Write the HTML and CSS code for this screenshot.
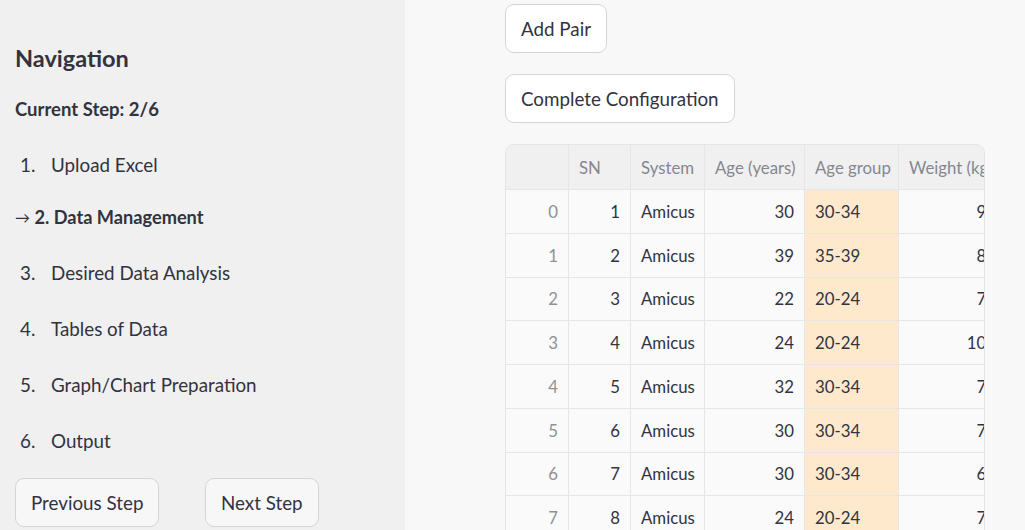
FILE: index.html
```html
<!DOCTYPE html>
<html lang="en">
<head>
<meta charset="utf-8">
<title>Data Management</title>
<link rel="stylesheet" href="styles.css">
</head>
<body>
<div class="app">
  <aside class="sidebar">
    <h2 class="nav-title">Navigation</h2>
    <p class="current-step">Current Step: 2/6</p>
    <ol class="steps">
      <li class="step"><span class="num">1.</span><span>Upload Excel</span></li>
      <li class="step step-current"><span class="arrow">→</span> 2. Data Management</li>
      <li class="step"><span class="num">3.</span><span>Desired Data Analysis</span></li>
      <li class="step"><span class="num">4.</span><span>Tables of Data</span></li>
      <li class="step"><span class="num">5.</span><span>Graph/Chart Preparation</span></li>
      <li class="step"><span class="num">6.</span><span>Output</span></li>
    </ol>
    <div class="nav-buttons">
      <div class="nav-col"><button class="btn btn-side">Previous Step</button></div>
      <div class="nav-col"><button class="btn btn-side">Next Step</button></div>
    </div>
  </aside>
  <main class="main">
    <button class="btn">Add Pair</button>
    <button class="btn">Complete Configuration</button>
    <div class="table-wrap">
      <div class="grid" role="table">
        <div class="cell head"></div><div class="cell head">SN</div><div class="cell head">System</div><div class="cell head">Age (years)</div><div class="cell head">Age group</div><div class="cell head">Weight (kg)</div>

        <div class="cell idx">0</div><div class="cell num">1</div><div class="cell">Amicus</div><div class="cell num">30</div><div class="cell grp">30-34</div><div class="cell num">92</div>
        <div class="cell idx">1</div><div class="cell num">2</div><div class="cell">Amicus</div><div class="cell num">39</div><div class="cell grp">35-39</div><div class="cell num">85</div>
        <div class="cell idx">2</div><div class="cell num">3</div><div class="cell">Amicus</div><div class="cell num">22</div><div class="cell grp">20-24</div><div class="cell num">74</div>
        <div class="cell idx">3</div><div class="cell num">4</div><div class="cell">Amicus</div><div class="cell num">24</div><div class="cell grp">20-24</div><div class="cell num">103</div>
        <div class="cell idx">4</div><div class="cell num">5</div><div class="cell">Amicus</div><div class="cell num">32</div><div class="cell grp">30-34</div><div class="cell num">76</div>
        <div class="cell idx">5</div><div class="cell num">6</div><div class="cell">Amicus</div><div class="cell num">30</div><div class="cell grp">30-34</div><div class="cell num">78</div>
        <div class="cell idx">6</div><div class="cell num">7</div><div class="cell">Amicus</div><div class="cell num">30</div><div class="cell grp">30-34</div><div class="cell num">65</div>
        <div class="cell idx">7</div><div class="cell num">8</div><div class="cell">Amicus</div><div class="cell num">24</div><div class="cell grp">20-24</div><div class="cell num">72</div>
      </div>
    </div>
  </main>
</div>
</body>
</html>
```
FILE: styles.css
```css
html, body {
  margin: 0;
  padding: 0;
  height: 100%;
  overflow: hidden;
}
body {
  font-family: Lato, "Liberation Sans", sans-serif;
  color: #31333f;
  background: #f8f8f8;
}
.app {
  display: flex;
  min-height: 100vh;
}
.sidebar {
  width: 405px;
  flex: none;
  background: #f0f0f0;
  padding: 44px 15px 0 15px;
  box-sizing: border-box;
  display: flex;
  flex-direction: column;
  align-items: flex-start;
}
.nav-title {
  margin: 0;
  font-size: 23.5px;
  line-height: 29px;
  font-weight: 700;
}
.current-step {
  margin: 23px 0 0 0;
  font-size: 18.5px;
  line-height: 27px;
  font-weight: 700;
}
.steps {
  list-style: none;
  margin: 28px 0 0 0;
  padding: 0;
  display: flex;
  flex-direction: column;
  gap: 28px;
}
.step {
  font-size: 18.8px;
  line-height: 28px;
  display: flex;
  padding-left: 5px;
  white-space: pre;
}
.step .num {
  width: 31px;
  flex: none;
}
.step-current {
  font-size: 18.2px;
  font-weight: 700;
  padding-left: 0;
  margin-top: -4px;
}
.arrow {
  font-size: 15px;
  font-weight: 400;
}
.nav-buttons {
  margin-top: 23px;
  display: flex;
  width: 100%;
}
.nav-col {
  width: 190px;
  flex: none;
}
.btn {
  font-family: inherit;
  font-size: 18.8px;
  color: #31333f;
  background: #ffffff;
  border: 1px solid #d5d5d8;
  border-radius: 9px;
  height: 49px;
  padding: 0 15px;
  display: block;
  box-sizing: border-box;
  cursor: pointer;
}
.btn-side {
  background: #f7f7f7;
}
.main {
  flex: 1;
  padding: 4px 0 0 100px;
  display: flex;
  flex-direction: column;
  align-items: flex-start;
  gap: 21px;
}
.table-wrap {
  width: 480px;
  border: 1px solid #e4e4e6;
  border-radius: 9px;
  overflow: hidden;
  box-sizing: border-box;
  background: #fafafa;
}
.grid {
  display: grid;
  grid-template-columns: 63px 62px 74px 100px 94px 108px;
  grid-template-rows: 45px;
  grid-auto-rows: 43.75px;
  width: max-content;
}
.cell {
  box-sizing: border-box;
  border-right: 1px solid #e6e6e8;
  border-bottom: 1px solid #e6e6e8;
  padding: 0 10px;
  font-size: 16.8px;
  display: flex;
  align-items: center;
  white-space: nowrap;
  overflow: hidden;
}
.head {
  background: #f0f0f0;
  color: #86878f;
}
.idx {
  justify-content: flex-end;
  color: #8f9098;
}
.num {
  justify-content: flex-end;
}
.grp {
  background: #ffe9cc;
}
```
